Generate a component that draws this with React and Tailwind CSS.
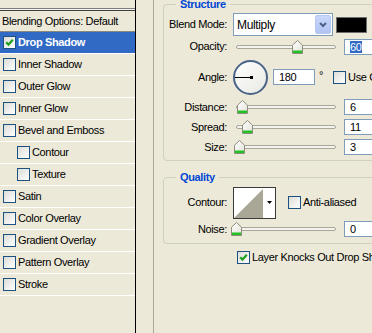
import React from "react";

const FONT = { fontFamily: '"Liberation Sans", Arial, sans-serif' };

function Check({ checked }) {
  return (
    <span className="w-[13px] h-[13px] shrink-0 border border-[#1C5180] bg-gradient-to-br from-[#DCDCD7] to-white flex items-center justify-center">
      {checked && (
        <svg width="9" height="9" viewBox="0 0 9 9">
          <path d="M1.2 4.2 L3.5 6.6 L7.8 1.8" stroke="#21A121" strokeWidth="2.2" fill="none" />
        </svg>
      )}
    </span>
  );
}

function Thumb({ center }) {
  return (
    <svg
      className="absolute top-[3px]"
      style={{ left: center - 5 }}
      width="11"
      height="14"
      viewBox="0 0 11 14"
    >
      <defs>
        <linearGradient id="tg" x1="0" y1="0" x2="1" y2="1">
          <stop offset="0" stopColor="#FFFFFF" />
          <stop offset="1" stopColor="#E3E2DA" />
        </linearGradient>
      </defs>
      <path d="M5.5 0.5 L10.5 5.2 L10.5 13.5 L0.5 13.5 L0.5 5.2 Z" fill="url(#tg)" stroke="#8F8D80" />
      <rect x="1" y="10.5" width="9" height="2.5" fill="#21C221" />
    </svg>
  );
}

function Slider({ center }) {
  return (
    <div className="relative w-[111px] h-[20px] shrink-0">
      <div className="absolute left-[3px] top-[8px] w-[100px] h-[4px] rounded-full border border-[#A9A798] bg-[#F4F3EE]" />
      <Thumb center={center - 233} />
    </div>
  );
}

function Field({ children }) {
  return (
    <div className="h-[16px] w-[40px] shrink-0 border border-[#7F9DB9] bg-white flex items-center pl-[5px] text-[11px] leading-[12px]">
      {children}
    </div>
  );
}

function Label({ children }) {
  return <div className="w-[64px] shrink-0 text-right pr-[1px] mr-[5px]">{children}</div>;
}

function SliderRow({ label, center, value, selected }) {
  return (
    <div className="h-[20px] flex items-center">
      <Label>{label}</Label>
      <Slider center={center} />
      <Field>
        {selected ? (
          <span className="bg-[#316AC5] text-white px-[0px] leading-[12px]">{value}</span>
        ) : (
          value
        )}
      </Field>
    </div>
  );
}

const rows = [
  { label: "Drop Shadow", checked: true, selected: true },
  { label: "Inner Shadow" },
  { label: "Outer Glow" },
  { label: "Inner Glow" },
  { label: "Bevel and Emboss" },
  { label: "Contour", indent: true },
  { label: "Texture", indent: true },
  { label: "Satin" },
  { label: "Color Overlay" },
  { label: "Gradient Overlay" },
  { label: "Pattern Overlay" },
  { label: "Stroke" },
];

export default function App() {
  return (
    <div
      className="w-[372px] h-[333px] overflow-hidden bg-[#ECE9D8] flex text-[11px] text-black tracking-[-0.35px]"
      style={FONT}
    >
      {/* Left list */}
      <div className="w-[136px] shrink-0 h-full border-r border-black flex flex-col">
        <div className="h-[8px]" />
        <div className="h-[1px] bg-[#808080]" />
        <div className="h-[1px] bg-[#F4F3EE]" />
        <div className="h-[1px] bg-[#404040]" />
        <div className="h-[21px] flex items-center pl-[2px] border-b border-[#8A8878]">
          Blending Options: Default
        </div>
        {rows.map((r) => (
          <div
            key={r.label}
            className={
              "h-[22px] shrink-0 flex items-center gap-[2px] border-b border-white " +
              (r.indent ? "pl-[17px] " : "pl-[3px] ") +
              (r.selected ? "bg-[#316AC5] text-white font-bold" : "")
            }
          >
            <Check checked={r.checked} />
            <span>{r.label}</span>
          </div>
        ))}
      </div>

      {/* spacer column */}
      <div className="w-[17px] shrink-0" />

      {/* Right content */}
      <div className="flex-1 h-full border-l border-[#ACA899] flex flex-col">
        {/* Structure */}
        <div className="relative mt-[4px] ml-[9px] w-[260px] shrink-0 border border-[#D0D0BF] rounded-[4px] pt-[8px] pb-[3px]">
          <span className="absolute -top-[7px] left-[12px] px-[4px] bg-[#ECE9D8] text-[#0046D5] font-bold leading-[13px]">
            Structure
          </span>
          <div className="h-[23px] flex items-center">
            <Label>Blend Mode:</Label>
            <div className="h-[23px] w-[100px] shrink-0 border border-[#7F9DB9] bg-white flex items-center">
              <span className="flex-1 pl-[3px] text-[12px]">Multiply</span>
              <span className="w-[16px] h-[19px] mr-[1px] rounded-[2px] bg-gradient-to-b from-[#C8D7FA] to-[#B0C4F3] border border-[#B7C9F3] flex items-center justify-center">
                <svg width="8" height="6" viewBox="0 0 8 6">
                  <path d="M1 1 L4 4 L7 1" stroke="#4D6185" strokeWidth="2" fill="none" />
                </svg>
              </span>
            </div>
            <div className="ml-[3px] w-[31px] h-[16px] bg-black border border-[#6E6E6E]" />
          </div>
          <div className="h-[21px] flex items-center">
            <Label>Opacity:</Label>
            <Slider center={297} />
            <Field>
              <span className="bg-[#316AC5] text-white">60</span>
            </Field>
          </div>
          <div className="h-[40px] flex items-center">
            <Label>Angle:</Label>
            <div className="relative w-[35px] h-[35px] shrink-0 rounded-full border-[2px] border-[#4A6388] bg-gradient-to-br from-white to-[#E8E8E4]">
              <div className="absolute left-0 top-[15px] w-[16px] h-[1px] bg-black" />
              <div className="absolute left-[15px] top-[14px] w-[3px] h-[3px] bg-black" />
            </div>
            <div className="ml-[5px] h-[16px] w-[42px] shrink-0 border border-[#7F9DB9] bg-white flex items-center pl-[5px]">
              180
            </div>
            <span className="ml-[4px] mr-[10px] -mt-[4px]">°</span>
            <Check />
            <span className="ml-[2px] whitespace-nowrap">Use Global Light</span>
          </div>
          <SliderRow label="Distance:" center={242} value="6" />
          <SliderRow label="Spread:" center={247} value="11" />
          <SliderRow label="Size:" center={239} value="3" />
        </div>

        {/* Quality */}
        <div className="relative mt-[16px] ml-[9px] w-[260px] shrink-0 border border-[#D0D0BF] rounded-[4px] pt-[8px] pb-[4px]">
          <span className="absolute -top-[7px] left-[12px] px-[4px] bg-[#ECE9D8] text-[#0046D5] font-bold leading-[13px]">
            Quality
          </span>
          <div className="h-[33px] flex items-center">
            <Label>Contour:</Label>
            <div className="w-[43px] h-[32px] shrink-0 border border-[#3A3A3A] bg-white flex">
              <svg width="29" height="30" viewBox="0 0 29 30" className="shrink-0">
                <polygon points="0,30 29,1 29,30" fill="#ABA796" />
              </svg>
              <div className="flex-1 flex items-center justify-center">
                <svg width="5" height="3" viewBox="0 0 5 3">
                  <polygon points="0,0 5,0 2.5,3" fill="#000" />
                </svg>
              </div>
            </div>
            <div className="ml-[12px] flex items-center gap-[2px]">
              <Check />
              <span>Anti-aliased</span>
            </div>
          </div>
          <SliderRow label="Noise:" center={236} value="0" />
        </div>

        <div className="h-[26px] ml-[9px] pl-[74px] flex items-center gap-[2px] whitespace-nowrap">
          <Check checked />
          <span>Layer Knocks Out Drop Shadow</span>
        </div>
      </div>
    </div>
  );
}
